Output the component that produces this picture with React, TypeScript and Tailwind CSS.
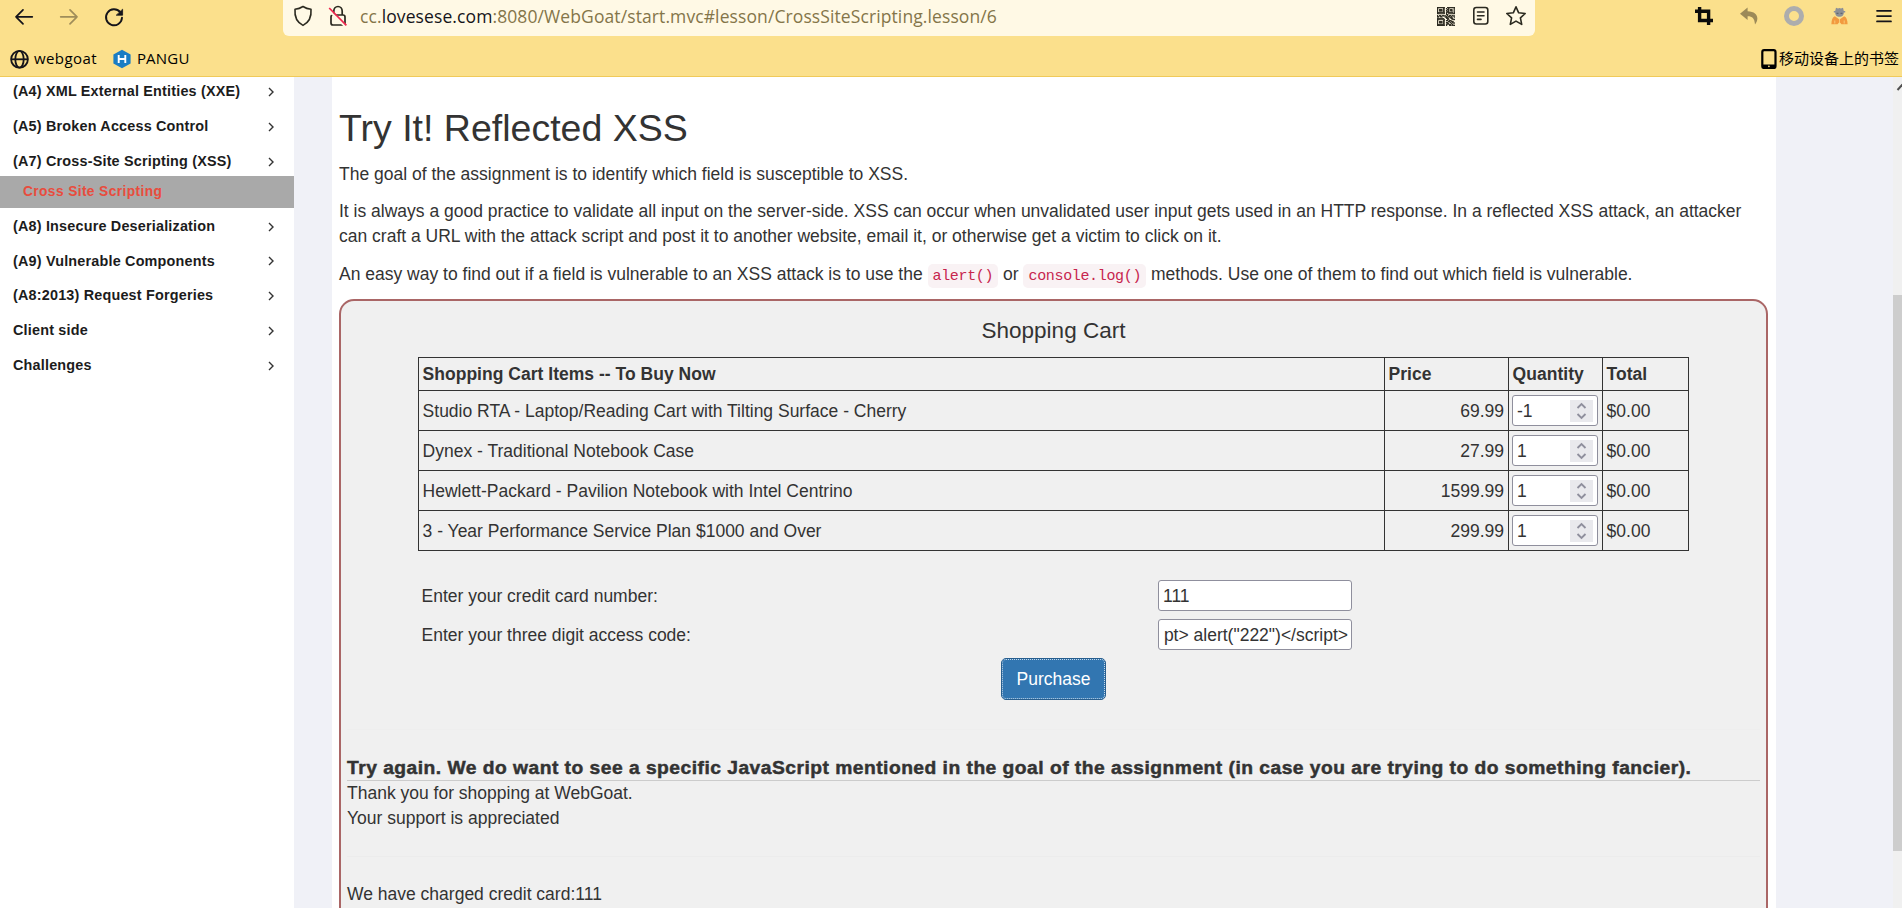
import type { ReactNode } from "react";

const menuTop = ["(A4) XML External Entities (XXE)", "(A5) Broken Access Control", "(A7) Cross-Site Scripting (XSS)"];
const menuBottom = [
  "(A8) Insecure Deserialization",
  "(A9) Vulnerable Components",
  "(A8:2013) Request Forgeries",
  "Client side",
  "Challenges",
];

const items = [
  { name: "Studio RTA - Laptop/Reading Cart with Tilting Surface - Cherry", price: "69.99", qty: "-1" },
  { name: "Dynex - Traditional Notebook Case", price: "27.99", qty: "1" },
  { name: "Hewlett-Packard - Pavilion Notebook with Intel Centrino", price: "1599.99", qty: "1" },
  { name: "3 - Year Performance Service Plan $1000 and Over", price: "299.99", qty: "1" },
];

const qrRows = [
  "1111111001111111",
  "1000001010100001",
  "1011101001101101",
  "1011101010101101",
  "1000001001100001",
  "1111111010111111",
  "0000000011000000",
  "1011011101011011",
  "1101100110110101",
  "0000000011001100",
  "1111111001100111",
  "1000001011011000",
  "1011101000110110",
  "1011101011001011",
  "1000001001100100",
  "1111111010011011",
];

function QrIcon() {
  return (
    <svg width="18" height="19" viewBox="0 0 16 16" preserveAspectRatio="none" fill="#2b2a20" stroke="#2b2a20" strokeWidth="0.1">
      {qrRows.flatMap((row, y) =>
        row.split("").map((c, x) => (c === "1" ? <rect key={`${x}-${y}`} x={x} y={y} width="1" height="1" /> : null)),
      )}
    </svg>
  );
}

function NavBar() {
  return (
    <div className="flex h-9 items-start">
      <div className="flex w-[283px] items-center pt-[5px]">
        <svg className="ml-[14px]" width="20" height="24" viewBox="0 0 20 24" fill="none" stroke="#15141a" strokeWidth="1.7" strokeLinecap="round" strokeLinejoin="round">
          <path d="M18.3 11.8H2M9 4.8L2 11.8L9 18.8" />
        </svg>
        <svg className="ml-[25px]" width="20" height="24" viewBox="0 0 20 24" fill="none" stroke="#9f8d5a" strokeWidth="1.7" strokeLinecap="round" strokeLinejoin="round">
          <path d="M1.7 11.8H18M11 4.8L18 11.8L11 18.8" />
        </svg>
        <svg className="ml-[24px]" width="22" height="24" viewBox="0 0 22 24" fill="none" stroke="#15141a" strokeWidth="1.9" strokeLinecap="round">
          <path d="M17.2 7.2A8 8 0 1 0 19 12.8" />
          <path d="M19.6 4.6V10.2H13.6Z" fill="#15141a" strokeWidth="0.8" strokeLinejoin="round" />
        </svg>
      </div>
      <div className="flex h-9 w-[1252px] items-center rounded-b-md bg-[#fff9e5] pb-[4px]">
        <svg className="ml-[10px]" width="20" height="22" viewBox="0 0 20 22" fill="none" stroke="#2b2a20" strokeWidth="1.6" strokeLinejoin="round">
          <path d="M10 1.5C12.4 3.1 15 4 18 4.3C18.6 11.6 15.6 17.6 10 20.4C4.4 17.6 1.4 11.6 2 4.3C5 4 7.600 3.100 10 1.500Z" />
        </svg>
        <svg className="ml-[15px]" width="20" height="22" viewBox="0 0 20 22" fill="none" stroke="#2b2a20" strokeWidth="1.7">
          <path d="M5.800 9V6.200A4.200 4.700 0 0 1 14.200 6.200V10" />
          <rect x="3" y="10" width="14" height="10" rx="2" />
          <path d="M0 4.500L16.800 21" stroke="#fff9e5" strokeWidth="2.400" />
          <path d="M1.200 3L18.400 20.400" stroke="#f0264f" strokeWidth="1.700" />
        </svg>
        <div className="ml-[12px] whitespace-nowrap font-['Open_Sans',sans-serif] text-[17.5px] leading-6 tracking-[0.1px] text-[#847549]">
          cc.<span className="text-[#15141a]">lovesese.com</span>:8080/WebGoat/start.mvc#lesson/CrossSiteScripting.lesson/6
        </div>
        <div className="ml-auto flex items-center pr-[8px]">
          <QrIcon />
          <svg className="ml-[17px]" width="18" height="20" viewBox="0 0 18 20" fill="none" stroke="#2b2a20" strokeWidth="1.6" strokeLinecap="round">
            <rect x="1.800" y="1.500" width="14" height="16.500" rx="2.500" />
            <path d="M5.500 6H12M5.500 9.700H12M5.500 13.400H9" />
          </svg>
          <svg className="ml-[15px]" width="22" height="22" viewBox="0 0 22 22" fill="none" stroke="#2b2a20" strokeWidth="1.6" strokeLinejoin="round">
            <path d="M11 1.800L13.700 7.800L20.200 8.500L15.400 12.900L16.700 19.400L11 16.100L5.300 19.400L6.600 12.900L1.800 8.500L8.300 7.800Z" />
          </svg>
        </div>
      </div>
      <div className="flex h-8 flex-1 items-center justify-end pr-[9px]">
        <svg width="18" height="18" viewBox="0 0 18 18" fill="none" stroke="#0b0b0b" strokeWidth="3.400">
          <path d="M0 4.300H13.600V18M4.600 0V13.500H18" />
        </svg>
        <svg className="ml-[27px]" width="18" height="18" viewBox="0 0 18 18" fill="#9c8a58">
          <path d="M7.600 0.500L0 6.800L7.600 13V9.300C12 9.200 14.600 11.200 15 17.600C19.600 11.500 17.600 4.500 7.600 4.200Z" />
        </svg>
        <svg className="ml-[26px]" width="20" height="20" viewBox="0 0 20 20" fill="none" stroke="#adadad" strokeWidth="5">
          <circle cx="10" cy="10" r="7.500" />
        </svg>
        <svg className="ml-[27px]" width="17" height="18" viewBox="0 0 17 18">
          <path d="M5 0.800L7 1.500L8.500 1L10 1.500L12 0.800L12.800 4H14.200V5.400H12.800C13 8 11 9.800 8.500 9.800C6 9.800 4 8 4.200 5.400H2.800V4H4.200Z" fill="#8d9096" />
          <path d="M5.500 6.300H7.500M9.500 6.300H11.500" stroke="#5f6670" strokeWidth="1.200" />
          <path d="M3.800 9.200L8.500 12.500L13.200 9.200C15.500 10.300 16.600 13 16.600 17.300H10.500L8.500 15L6.500 17.300H0.400C0.400 13 1.500 10.300 3.800 9.200Z" fill="#f29a3f" />
          <path d="M8.500 12V15.500M3.800 13.500V16.500M13.200 13.500V16.500" stroke="#fbe08c" strokeWidth="0.700" />
        </svg>
        <svg className="ml-[27px]" width="18" height="16" viewBox="0 0 18 16" stroke="#15141a" strokeWidth="1.700" strokeLinecap="round">
          <path d="M2 2.800H16M2 8.100H16M2 13.400H16" />
        </svg>
      </div>
    </div>
  );
}

function BookmarksBar() {
  return (
    <div className="flex h-10 items-center pr-[3px] pt-[6px] font-['Open_Sans','Noto_Sans_CJK_SC',sans-serif] text-[15px] text-black">
      <svg className="ml-[10px]" width="19" height="20" viewBox="0 0 19 20" fill="none" stroke="#15141a" strokeWidth="1.800">
        <circle cx="9.500" cy="10.300" r="8.400" />
        <ellipse cx="9.500" cy="10.300" rx="4.200" ry="8.400" />
        <path d="M1.200 10.300H17.800" />
      </svg>
      <span className="-mt-[2px] ml-[5px] tracking-[0.4px]">webgoat</span>
      <svg className="ml-[16px]" width="18" height="20" viewBox="0 0 18 20">
        <path d="M9 0.800L17.600 5.500V14.500L9 19.200L0.400 14.500V5.500Z" fill="#1a7dc4" />
        <path d="M5.700 6V14M12.300 6V14M5.700 10H12.300" stroke="#fff" strokeWidth="1.900" fill="none" />
      </svg>
      <span className="-mt-[2px] ml-[6px] tracking-[0.2px]">PANGU</span>
      <svg className="ml-auto" width="16" height="20" viewBox="0 0 16 20">
        <rect x="1.300" y="1.200" width="13.200" height="17.800" rx="1.800" fill="none" stroke="#000" strokeWidth="2.200" />
        <rect x="1.300" y="15.500" width="13.200" height="3.500" fill="#000" />
        <circle cx="7.900" cy="17.300" r="0.900" fill="#fbe08c" />
      </svg>
      <span className="-mt-[2px] ml-[2px] whitespace-nowrap">移动设备上的书签</span>
    </div>
  );
}

function MenuRow({ label }: { label: string }) {
  return (
    <li className="flex h-[34.8px] items-center justify-between pl-[13px] pr-[19px] text-[14.4px] font-bold tracking-[0.19px] text-[#1c1c1c]">
      {label}
      <svg width="8" height="10" viewBox="0 0 8 10" fill="none" stroke="#333" strokeWidth="1.400">
        <path d="M2 1L6 5L2 9" />
      </svg>
    </li>
  );
}

function Sidebar() {
  return (
    <nav className="w-[294px] shrink-0 overflow-hidden bg-white">
      <ul className="-mt-[2.2px]">
        {menuTop.map((label) => (
          <MenuRow key={label} label={label} />
        ))}
        <li className="-mt-[3.2px] mb-[1.2px] flex h-8 items-center bg-[#a9a9a9] pl-[23px] pt-px text-[13.75px] font-bold tracking-[0.39px] text-[#e84c3d]">
          Cross Site Scripting
        </li>
        {menuBottom.map((label) => (
          <MenuRow key={label} label={label} />
        ))}
      </ul>
    </nav>
  );
}

function Code({ children }: { children: ReactNode }) {
  return (
    <code className="rounded-[5px] bg-[#f9f2f4] px-[5px] pb-[3.500px] pt-[3.500px] align-[0.5px] font-['Liberation_Mono',monospace] text-[15px] leading-none tracking-[-0.34px] text-[#c7254e]">
      {children}
    </code>
  );
}

function Quantity({ value }: { value: string }) {
  return (
    <div className="flex h-[31px] w-[86px] items-center justify-between rounded-[3px] border border-[#8f8f9d] bg-white pl-[4px] pr-[4px]">
      <span className="pt-[2px]">{value}</span>
      <svg className="bg-[#e9e9ed]" width="23" height="22" viewBox="0 0 23 22" fill="none" stroke="#8f8f9d" strokeWidth="1.800">
        <path d="M7.500 8L11.500 4L15.500 8M7.500 14L11.500 18L15.500 14" />
      </svg>
    </div>
  );
}

const cell = "flex items-center border-b border-r border-[#333] pl-[3.6px] pr-[4px] pt-[2px]";

function CartTable() {
  return (
    <div className="mx-auto grid w-[1271px] grid-cols-[966px_124px_94px_86px] border-l border-t border-[#333]">
      {["Shopping Cart Items -- To Buy Now", "Price", "Quantity", "Total"].map((h) => (
        <div key={h} className="flex h-[33px] items-center border-b border-r border-[#333] px-[3.6px] pt-px font-bold tracking-[0.02px]">
          {h}
        </div>
      ))}
      {items.map((item) => (
        <div key={item.name} className="contents">
          <div className={`h-10 ${cell}`}>{item.name}</div>
          <div className={`justify-end ${cell}`}>{item.price}</div>
          <div className="flex items-center border-b border-r border-[#333] pl-[3px]">
            <Quantity value={item.qty} />
          </div>
          <div className={cell}>$0.00</div>
        </div>
      ))}
    </div>
  );
}

const field = "flex h-[31px] w-[194px] items-center rounded-[3px] border border-[#8f8f9d] bg-white pl-[4px] pr-[3px] pt-px";

function Lesson() {
  return (
    <main className="ml-[38px] w-[1444px] shrink-0 overflow-hidden bg-white pl-[7px] pr-2 pt-[30.5px] text-[17.5px] leading-[25px] text-[#333]">
      <h1 className="mb-[13.25px] text-[37.5px] leading-[41.25px]">Try It! Reflected XSS</h1>
      <p className="mb-[11.5px]">The goal of the assignment is to identify which field is susceptible to XSS.</p>
      <p className="mb-[13.5px]">
        It is always a good practice to validate all input on the server-side. XSS can occur when unvalidated user input gets used
        in an HTTP response. In a reflected XSS attack, an attacker can craft a URL with the attack script and post it to another
        website, email it, or otherwise get a victim to click on it.
      </p>
      <p className="mb-[12px] h-[25px]">
        An easy way to find out if a field is vulnerable to an XSS attack is to use the <Code>alert()</Code> or{" "}
        <Code>console.log()</Code> methods. Use one of them to find out which field is vulnerable.
      </p>
      <section className="h-[700px] rounded-[15px] border-2 border-[#a66] bg-[#f0f0f0] px-[6px] pt-[14px]">
        <h2 className="mb-[10px] text-center text-[22.5px] leading-8">Shopping Cart</h2>
        <CartTable />
        <div className="mx-auto mt-[29px] grid w-[1265px] grid-cols-[737px_auto] gap-y-2">
          <div className="self-center pl-[0.5px] pt-[1.500px]">Enter your credit card number:</div>
          <div className={field}>111</div>
          <div className="self-center pl-[0.5px] pt-[1.500px]">Enter your three digit access code:</div>
          <div className={`${field} justify-end whitespace-nowrap`}>{'pt> alert("222")</script>'}</div>
        </div>
        <button className="mx-auto mt-2 block h-[42px] w-[105px] rounded-[5px] border border-[#285e8e] bg-[#3276b1] text-white">
          <span className="flex h-full w-full items-center justify-center rounded-[4px] border border-dotted border-[#c3d8ea]">
            Purchase
          </span>
        </button>
        <hr className="mt-[29px] border-[#eee]" />
        <div className="mt-[25.5px] h-[25px] border-b border-[#ccc]">
          <div className="w-max origin-left scale-x-[1.1] whitespace-nowrap font-bold tracking-[0.432px] [-webkit-text-stroke:0.45px_#333]">
            Try again. We do want to see a specific JavaScript mentioned in the goal of the assignment (in case you are trying to do
            something fancier).
          </div>
        </div>
        <p>
          Thank you for shopping at WebGoat.
          <br />
          Your support is appreciated
        </p>
        <hr className="mb-[25px] mt-[25px] border-[#ececec]" />
        <p>We have charged credit card:111</p>
      </section>
    </main>
  );
}

function Scrollbar() {
  return (
    <div className="ml-auto flex w-[9px] flex-col overflow-hidden bg-[#f0f0f0]">
      <svg className="mt-[6px]" width="9" height="8" viewBox="0 0 9 8" fill="none" stroke="#505050" strokeWidth="2">
        <path d="M4.500 7L9.500 1.500" />
      </svg>
      <div className="mt-[204px] h-[556px] bg-[#cdcdcd]" />
    </div>
  );
}

export default function App() {
  return (
    <div className="flex h-[908px] w-[1902px] flex-col overflow-hidden bg-[#f0f1f7] font-['Liberation_Sans',Arial,sans-serif]">
      <header className="h-[77px] shrink-0 border-b border-[#f0ca5a] bg-[#fbe08c]">
        <NavBar />
        <BookmarksBar />
      </header>
      <div className="flex min-h-0 flex-1">
        <Sidebar />
        <Lesson />
        <Scrollbar />
      </div>
    </div>
  );
}
